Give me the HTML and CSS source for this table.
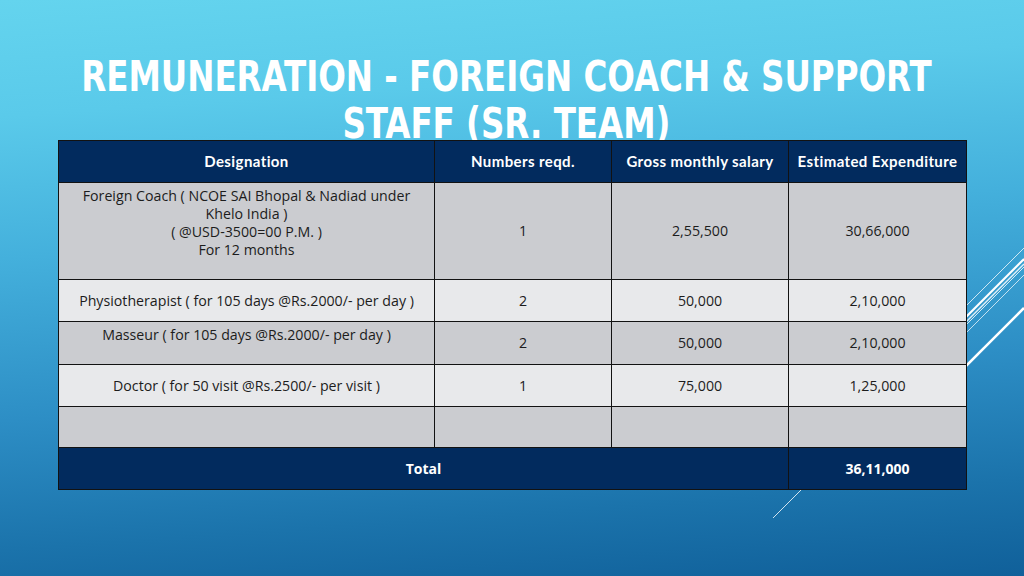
FILE: index.html
```html
<!DOCTYPE html>
<html lang="en">
<head>
<meta charset="utf-8">
<title>Remuneration - Foreign Coach &amp; Support Staff</title>
<link rel="stylesheet" href="styles.css">
</head>
<body>
<div class="slide">
  <svg class="deco" width="1024" height="576" viewBox="0 0 1024 576" aria-hidden="true">
    <line x1="800" y1="472" x2="1024" y2="248" stroke="#ffffff" stroke-opacity="0.75" stroke-width="1"/>
    <line x1="810" y1="473" x2="1024" y2="259" stroke="#ffffff" stroke-width="2"/>
    <line x1="815" y1="473" x2="1024" y2="264" stroke="#ffffff" stroke-opacity="0.85" stroke-width="1.5"/>
    <line x1="773" y1="518" x2="1024" y2="267" stroke="#ffffff" stroke-opacity="0.8" stroke-width="1"/>
    <line x1="825" y1="474" x2="1024" y2="275" stroke="#ffffff" stroke-opacity="0.7" stroke-width="1"/>
    <line x1="860" y1="472" x2="1024" y2="308" stroke="#ffffff" stroke-width="2.5"/>
  </svg>
  <div class="title-wrap">
    <h1 class="title">REMUNERATION - FOREIGN COACH &amp; SUPPORT<br>STAFF (SR. TEAM)</h1>
  </div>
  <table class="grid">
    <colgroup>
      <col class="c-desig">
      <col class="c-num">
      <col class="c-num">
      <col class="c-num2">
    </colgroup>
    <thead>
      <tr class="r-head">
        <th>Designation</th>
        <th>Numbers reqd.</th>
        <th>Gross monthly salary</th>
        <th>Estimated Expenditure</th>
      </tr>
    </thead>
    <tbody>
      <tr class="r-dark r-tall">
        <td class="top">Foreign Coach ( NCOE SAI Bhopal &amp; Nadiad under<br>Khelo India )<br>( @USD-3500=00 P.M. )<br>For 12 months</td>
        <td>1</td>
        <td>2,55,500</td>
        <td>30,66,000</td>
      </tr>
      <tr class="r-light r-42">
        <td>Physiotherapist ( for 105 days @Rs.2000/- per day )</td>
        <td>2</td>
        <td>50,000</td>
        <td>2,10,000</td>
      </tr>
      <tr class="r-dark r-43">
        <td class="top">Masseur ( for 105 days @Rs.2000/- per day )</td>
        <td>2</td>
        <td>50,000</td>
        <td>2,10,000</td>
      </tr>
      <tr class="r-light r-42">
        <td>Doctor ( for 50 visit @Rs.2500/- per visit )</td>
        <td>1</td>
        <td>75,000</td>
        <td>1,25,000</td>
      </tr>
      <tr class="r-dark r-41">
        <td></td>
        <td></td>
        <td></td>
        <td></td>
      </tr>
    </tbody>
    <tfoot>
      <tr class="r-foot">
        <td colspan="3">Total</td>
        <td>36,11,000</td>
      </tr>
    </tfoot>
  </table>
</div>
</body>
</html>
```

FILE: styles.css
```css
html, body {
  margin: 0;
  padding: 0;
}

.slide {
  position: relative;
  width: 1024px;
  height: 576px;
  overflow: hidden;
  background: linear-gradient(176deg, #64d4ee 0%, #5acaea 18%, #44b0dc 40%, #2d8ec5 65%, #1b73ab 85%, #10609a 100%);
  padding-top: 53px;
  box-sizing: border-box;
}

.deco {
  position: absolute;
  left: 0;
  top: 0;
  z-index: 0;
}

.title-wrap {
  position: relative;
  z-index: 1;
  display: flex;
  justify-content: center;
  padding-right: 11px;
  margin-bottom: -7px;
}

.title {
  margin: 0;
  font-family: "DejaVu Sans Condensed", "Liberation Sans", sans-serif;
  font-weight: 700;
  font-size: 42px;
  line-height: 47px;
  color: #ffffff;
  text-align: center;
  white-space: nowrap;
  transform: scaleX(0.86);
  transform-origin: 50% 50%;
}

.grid {
  position: relative;
  z-index: 2;
  margin-left: 58px;
  width: 908px;
  table-layout: fixed;
  border-collapse: collapse;
  font-family: "Open Sans", "DejaVu Sans", sans-serif;
  font-size: 14.2px;
  line-height: 18px;
  color: #1c1c1c;
}

.c-desig { width: 376px; }
.c-num { width: 177px; }
.c-num2 { width: 178px; }

.grid th,
.grid td {
  border: 1px solid #121212;
  padding: 0 2px;
  text-align: center;
  vertical-align: middle;
}

.grid td.top {
  vertical-align: top;
  padding-top: 4px;
}

.r-head th {
  height: 41px;
  padding-bottom: 2px;
  background: #022b5e;
  color: #ffffff;
  font-family: "Lato", "Open Sans", sans-serif;
  font-weight: 700;
  font-size: 15px;
  letter-spacing: 0.4px;
}

.r-dark td { background: #cbccd0; }
.r-light td { background: #e8e9eb; }

.r-head th { height: 39px; }
.r-tall td { height: 96px; }
.r-tall td.top { height: 92px; }
.r-42 td { height: 41px; }
.r-43 td { height: 42px; }
.r-43 td.top { height: 38px; }
.r-41 td { height: 40px; }

.r-foot td {
  height: 41px;
  background: #022b5e;
  color: #ffffff;
  font-weight: 700;
  font-size: 14px;
}
```
